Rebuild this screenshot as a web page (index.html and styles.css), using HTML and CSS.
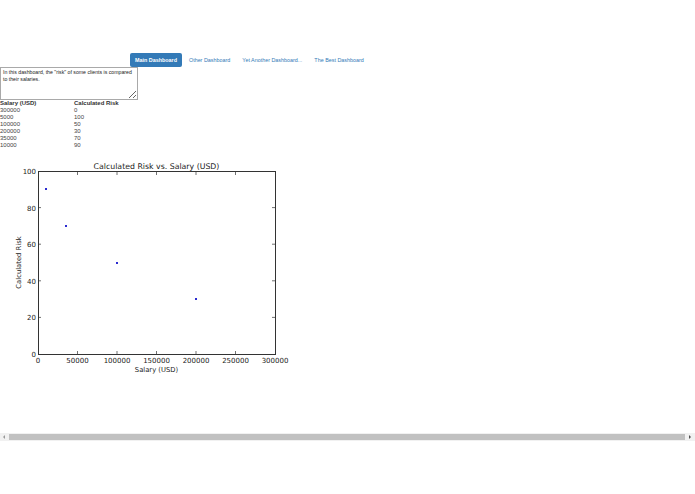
FILE: index.html
```html
<!DOCTYPE html>
<html lang="en">
<head>
  <meta charset="UTF-8" />
  <title>Main Dashboard</title>
  <link rel="stylesheet" href="styles.css">
</head>
<body>
  <nav class="nav">
    <a class="nav-link active" href="#">Main Dashboard</a>
    <a class="nav-link" href="#">Other Dashboard</a>
    <a class="nav-link" href="#">Yet Another Dashboard...</a>
    <a class="nav-link" href="#">The Best Dashboard</a>
  </nav>

  <textarea class="intro">In this dashboard, the "risk" of some clients is compared to their salaries.</textarea>

  <table class="data">
    <tr><th>Salary (USD)</th><th>Calculated Risk</th></tr>
    <tr><td>300000</td><td>0</td></tr>
    <tr><td>5000</td><td>100</td></tr>
    <tr><td>100000</td><td>50</td></tr>
    <tr><td>200000</td><td>30</td></tr>
    <tr><td>35000</td><td>70</td></tr>
    <tr><td>10000</td><td>90</td></tr>
  </table>

  <svg class="chart" width="300" height="225" viewBox="0 0 300 225">
    <text class="title" x="156.5" y="14.5" text-anchor="middle">Calculated Risk vs. Salary (USD)</text>
    <rect x="38.5" y="17.5" width="237" height="183" fill="none" stroke="#333" stroke-width="1"/>
    <g stroke="#333" stroke-width="0.7">
      <path d="M77.5 200v-3M117 200v-3M156.5 200v-3M196 200v-3M235.5 200v-3"/>
      <path d="M77.5 18v3M117 18v3M156.5 18v3M196 18v3M235.5 18v3"/>
      <path d="M38 163.4h3M38 126.8h3M38 90.2h3M38 53.6h3"/>
      <path d="M275 163.4h-3M275 126.8h-3M275 90.2h-3M275 53.6h-3"/>
    </g>
    <g class="tick" text-anchor="end">
      <text x="36" y="203">0</text>
      <text x="36" y="166.4">20</text>
      <text x="36" y="129.8">40</text>
      <text x="36" y="93.2">60</text>
      <text x="36" y="56.6">80</text>
      <text x="36" y="20">100</text>
    </g>
    <g class="tick" text-anchor="middle">
      <text x="38" y="209">0</text>
      <text x="77.5" y="209">50000</text>
      <text x="117" y="209">100000</text>
      <text x="156.5" y="209">150000</text>
      <text x="196" y="209">200000</text>
      <text x="235.5" y="209">250000</text>
      <text x="275" y="209">300000</text>
    </g>
    <text class="label" x="156.5" y="218" text-anchor="middle">Salary (USD)</text>
    <text class="label" x="0" y="0" text-anchor="middle" transform="translate(21 108.5) rotate(-90)">Calculated Risk</text>
    <g fill="#2b2bd0">
      <rect x="45" y="34" width="2" height="2"/>
      <rect x="65" y="71" width="2" height="2"/>
      <rect x="116" y="108" width="2" height="2"/>
      <rect x="195" y="144" width="2" height="2"/>
    </g>
  </svg>

  <div class="hscroll">
    <span class="arrow left"></span>
    <div class="thumb"></div>
    <span class="arrow right"></span>
  </div>
</body>
</html>
```

FILE: styles.css
```css
body {
  margin: 0;
  font-family: "Liberation Sans", Arial, sans-serif;
  background: #fff;
  color: #333;
}
.nav {
  display: flex;
  align-items: center;
  margin-top: 53px;
  padding-left: 130px;
  height: 14px;
}
.nav-link {
  font-size: 5.4px;
  color: #337ab7;
  text-decoration: none;
  white-space: nowrap;
  padding: 0 6px;
  line-height: 14px;
}
.nav-link.active {
  background: #337ab7;
  color: #fff;
  font-weight: bold;
  border-radius: 2px;
  padding: 0 5px;
  margin-right: 1px;
}
.intro {
  display: block;
  box-sizing: border-box;
  width: 138px;
  height: 33px;
  margin: 0;
  padding: 1px 0 1px 2px;
  border: 1px solid #a9a9a9;
  font-family: "Liberation Sans", Arial, sans-serif;
  font-size: 5.2px;
  line-height: 7px;
  color: #222;
  resize: both;
}
.data {
  border-collapse: collapse;
  font-family: "Liberation Sans", Arial, sans-serif;
  font-size: 6px;
  color: #333;
}
.data th {
  text-align: left;
  font-weight: bold;
  color: #333;
  padding: 0;
  line-height: 7px;
  height: 7px;
}
.data td {
  padding: 0;
  line-height: 7px;
  height: 7px;
  color: #444;
}
.data th:first-child,
.data td:first-child { width: 74px; }
.chart {
  display: block;
  margin-top: 5px;
  font-family: "DejaVu Sans", sans-serif;
}
.chart .title { font-size: 7.8px; fill: #222; }
.chart .tick { font-size: 7px; fill: #222; }
.chart .label { font-size: 6.8px; fill: #222; }
.hscroll {
  display: flex;
  align-items: center;
  height: 8px;
  margin-top: 54px;
  background: #f1f1f1;
}
.thumb {
  flex: 1;
  height: 6px;
  background: #c1c1c1;
  margin: 0 4px;
}
.arrow {
  width: 0;
  height: 0;
  border-top: 2px solid transparent;
  border-bottom: 2px solid transparent;
}
.arrow.left { border-right: 2px solid #999; margin-left: 3px; }
.arrow.right { border-left: 2px solid #505050; margin-right: 4px; }
```
